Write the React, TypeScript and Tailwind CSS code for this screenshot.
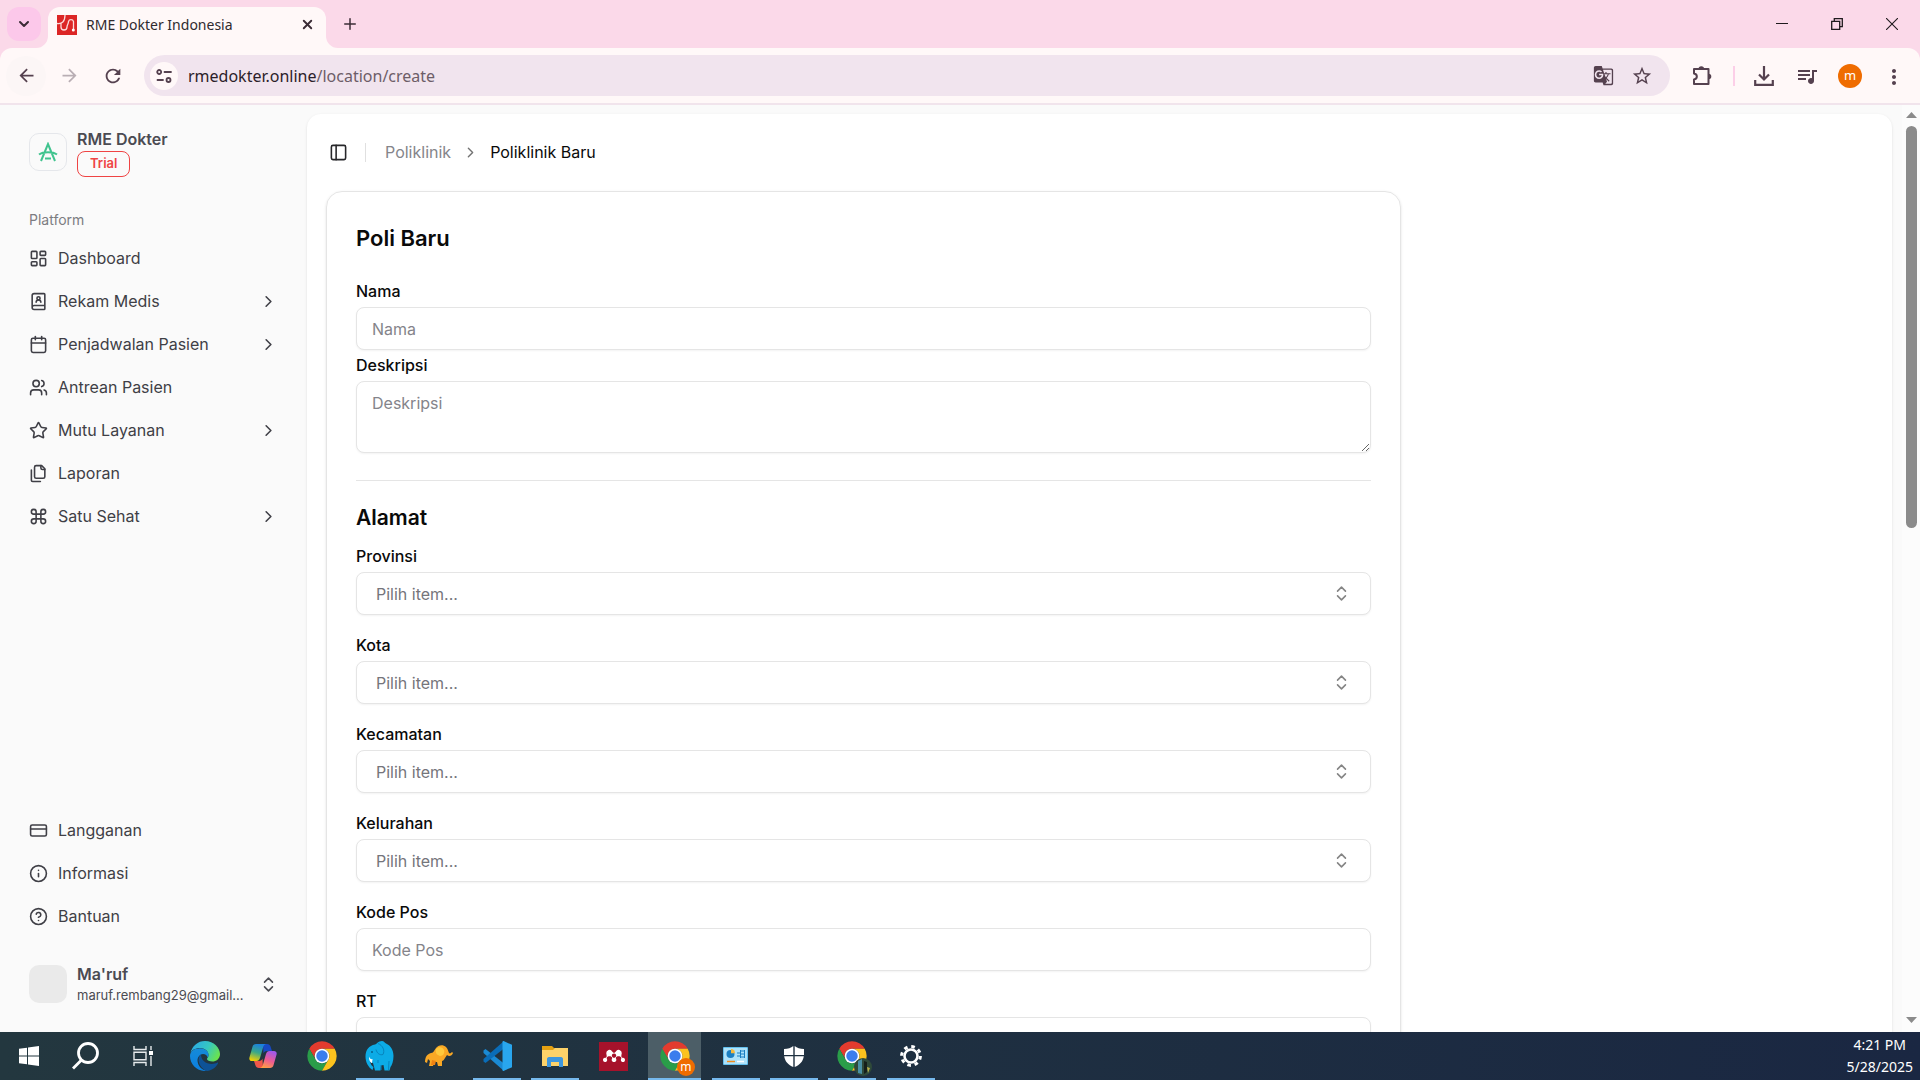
import { useState } from "react";
import {
  BookUser,
  Calendar,
  ChevronDown,
  ChevronRight,
  ChevronsUpDown,
  CircleHelp,
  Command,
  CreditCard,
  Info,
  LayoutDashboard,
  PanelLeft,
  Plus,
  Star,
  Users,
  X
} from "lucide-react";
import {
  MdArrowBack,
  MdArrowForward,
  MdGTranslate,
  MdMoreVert,
  MdQueueMusic,
  MdRefresh,
  MdStarBorder
} from "react-icons/md";
import { SiMendeley } from "react-icons/si";

type NavItem = {
  icon: React.ComponentType<{ size?: number }>;
  label: string;
  expandable?: boolean;
};

function FilesIcon({ size = 24 }: { size?: number }) {
  return (
    <svg
      fill="none"
      height={size}
      stroke="currentColor"
      strokeLinecap="round"
      strokeLinejoin="round"
      strokeWidth="2"
      viewBox="0 0 24 24"
      width={size}
    >
      <path d="M20 7h-3a2 2 0 0 1-2-2V2" />
      <path d="M9 18a2 2 0 0 1-2-2V4a2 2 0 0 1 2-2h7l4 4v10a2 2 0 0 1-2 2Z" />
      <path d="M3 7.6v12.8A1.6 1.6 0 0 0 4.6 22h9.8" />
    </svg>
  );
}

const MAIN_NAV: NavItem[] = [
  { icon: LayoutDashboard, label: "Dashboard" },
  { icon: BookUser, label: "Rekam Medis", expandable: true },
  { icon: Calendar, label: "Penjadwalan Pasien", expandable: true },
  { icon: Users, label: "Antrean Pasien" },
  { icon: Star, label: "Mutu Layanan", expandable: true },
  { icon: FilesIcon, label: "Laporan" },
  { icon: Command, label: "Satu Sehat", expandable: true }
];

const FOOTER_NAV: NavItem[] = [
  { icon: CreditCard, label: "Langganan" },
  { icon: Info, label: "Informasi" },
  { icon: CircleHelp, label: "Bantuan" }
];

const REGION_FIELDS = ["Provinsi", "Kota", "Kecamatan", "Kelurahan"];

/* ---------- browser chrome ---------- */

function Favicon() {
  return (
    <svg className="size-5 shrink-0" viewBox="0 0 20 20">
      <rect fill="#dc2626" height="20" width="20" />
      <path
        d="M0 8.500c5 1 8-2 8-8.500M4 8.500v3.500a3 3 0 0 0 6 0c0-2 1.500-3 1.500-5.500a2.600 2.600 0 0 1 5 0V14"
        fill="none"
        stroke="#fbdada"
        strokeLinecap="round"
        strokeWidth="1.300"
      />
      <circle cx="16.300" cy="15" fill="#fff" r="1.500" />
    </svg>
  );
}

function TabStrip() {
  return (
    <div className="flex h-12 items-start bg-[#fbd9e9] pl-[7px] pt-[7px] text-[#3b2c36]">
      <button
        aria-label="Search tabs"
        className="z-10 grid size-[34px] place-items-center rounded-xl bg-[#fcc8ea]"
        type="button"
      >
        <ChevronDown size={16} strokeWidth={3} />
      </button>
      <div className="relative ml-[7px] flex h-[41px] w-[278px] items-center rounded-t-xl bg-[#fff8f8] pb-[6px] pl-[9px] pr-[7px]">
        <svg className="absolute -left-3 bottom-0 size-3" viewBox="0 0 12 12">
          <path d="M12 0v12H0A12 12 0 0 0 12 0z" fill="#fff8f8" />
        </svg>
        <svg className="absolute -right-3 bottom-0 size-3" viewBox="0 0 12 12">
          <path d="M0 0v12h12A12 12 0 0 1 0 0z" fill="#fff8f8" />
        </svg>
        <Favicon />
        <span className="ml-[9px] flex-1 text-[14px] text-[#2f2a2e]">RME Dokter Indonesia</span>
        <button aria-label="Close tab" className="grid size-6 place-items-center" type="button">
          <X size={15} strokeWidth={3} />
        </button>
      </div>
      <button aria-label="New tab" className="ml-[7px] grid size-[34px] place-items-center" type="button">
        <Plus size={18} strokeWidth={2} />
      </button>
      <div className="ml-auto flex pr-px text-[#1f1a1d]">
        <button aria-label="Minimize" className="grid h-[34px] w-[55px] place-items-center" type="button">
          <svg className="size-3" viewBox="0 0 12 12">
            <path d="M0 5.500h12" stroke="currentColor" />
          </svg>
        </button>
        <button aria-label="Restore" className="grid h-[34px] w-[55px] place-items-center" type="button">
          <svg className="size-3" fill="none" viewBox="0 0 12 12">
            <path d="M.7 3.300h8v8h-8zM3.300 3V.7h8v8H9" stroke="currentColor" strokeWidth="1.300" />
          </svg>
        </button>
        <button aria-label="Close" className="grid h-[34px] w-[55px] place-items-center" type="button">
          <svg className="size-3" fill="none" viewBox="0 0 12 12">
            <path d="M0 0l12 12M12 0L0 12" stroke="currentColor" strokeWidth="1.100" />
          </svg>
        </button>
      </div>
    </div>
  );
}

function Toolbar() {
  return (
    <div className="bg-[#fbd9e9]">
      <div className="flex h-[57px] items-center rounded-t-xl border-b-2 border-[#f1e4ec] bg-[#fff8f8] pl-[6px] pr-[7px] text-[#55414f]">
        <button aria-label="Back" className="grid size-10 place-items-center rounded-full bg-[#fcf6f6]" type="button">
          <MdArrowBack size={21} />
        </button>
        <button aria-label="Forward" className="ml-[3px] grid size-10 place-items-center text-[#b9aeb4]" type="button">
          <MdArrowForward size={21} />
        </button>
        <button aria-label="Reload" className="ml-[4px] grid size-10 place-items-center" type="button">
          <MdRefresh size={22} />
        </button>
        <div className="ml-[11px] flex h-[41px] flex-1 items-center rounded-full bg-[#f1e4ee] pl-[6px] pr-[16px]">
          <button
            aria-label="Site information"
            className="grid size-7 shrink-0 place-items-center rounded-full bg-[#fff8f8]"
            type="button"
          >
            <svg className="size-4" fill="none" stroke="currentColor" strokeLinecap="round" strokeWidth="1.800" viewBox="0 0 16 16">
              <circle cx="3.200" cy="4" r="2" />
              <path d="M8.500 4H15M1.500 12H7" />
              <circle cx="12.500" cy="12" r="2" />
            </svg>
          </button>
          <span className="ml-[10px] flex-1 text-[16px] text-[#2b2129]">
            rmedokter.online<span className="text-[#6d5d67]">/location/create</span>
          </span>
          <button aria-label="Translate this page" className="grid size-8 place-items-center" type="button">
            <MdGTranslate size={21} />
          </button>
          <button aria-label="Bookmark this tab" className="ml-[11px] grid size-6 place-items-center" type="button">
            <MdStarBorder size={22} />
          </button>
        </div>
        <button aria-label="Extensions" className="ml-[16px] grid size-8 place-items-center" type="button">
          <svg className="size-5" fill="none" viewBox="0 0 20 20">
            <path
              d="M2 3h14.500v15H2v-4.500c3.800-.6 3.800-5.400 0-6z"
              stroke="currentColor"
              strokeLinejoin="round"
              strokeWidth="2"
            />
            <path d="M6.500 3a2.800 2.800 0 0 1 5.600 0zM16.500 7.700a2.800 2.800 0 0 1 0 5.600z" fill="currentColor" />
          </svg>
        </button>
        <div className="ml-[15px] h-5 w-[2px] bg-[#fccfe8]" />
        <button aria-label="Downloads" className="ml-[13px] grid size-8 place-items-center" type="button">
          <svg className="size-5" fill="none" stroke="currentColor" strokeWidth="2.200" viewBox="0 0 20 20">
            <path d="M10 0v13M5 8.500l5 5 5-5M1.200 14v4.800h17.600V14" />
          </svg>
        </button>
        <button aria-label="Media controls" className="ml-[11px] grid size-8 place-items-center" type="button">
          <MdQueueMusic size={24} />
        </button>
        <button
          aria-label="Profile"
          className="ml-[15px] grid size-6 place-items-center rounded-full bg-[#ef6c00] text-[13px] leading-none text-white"
          type="button"
        >
          m
        </button>
        <button aria-label="Menu" className="ml-[20px] grid size-[22px] place-items-center" type="button">
          <MdMoreVert size={24} />
        </button>
        <span className="w-[9px]" />
      </div>
    </div>
  );
}

/* ---------- sidebar ---------- */

function NavLink({ item }: { item: NavItem }) {
  const Icon = item.icon;

  return (
    <li>
      <a className="flex h-[38px] items-center gap-[10px] text-[#3f3f46]" href="#">
        <Icon size={19} />
        <span className="flex-1">{item.label}</span>
        {item.expandable && <ChevronRight size={19} />}
      </a>
    </li>
  );
}

function Sidebar() {
  return (
    <aside className="flex w-[307px] shrink-0 flex-col px-[29px] pb-6 pt-[22px] text-[16px] text-[#4b4b52]">
      <div className="flex items-center gap-[10px]">
        <div className="grid size-[38px] place-items-center rounded-[10px] border border-[#e5e7eb]">
          <svg className="size-5" fill="none" stroke="#41c48f" strokeWidth="2" viewBox="0 0 20 20">
            <path d="M3 19L10 2l7 17M1 12.500C5 9.500 15 9.500 19 12.500M7 16.500h6" />
          </svg>
        </div>
        <div className="flex flex-col items-start">
          <span className="h-6 font-semibold leading-6">RME Dokter</span>
          <span className="flex h-[26px] items-center rounded-lg border border-[#ef4444] px-3 text-[13px] font-semibold text-[#ef4444]">
            Trial
          </span>
        </div>
      </div>

      <h2 className="mb-2 mt-8 text-[14px] leading-[22px] text-[#7c7c81]">Platform</h2>
      <nav>
        <ul className="flex flex-col gap-[5px]">
          {MAIN_NAV.map((item) => (
            <NavLink item={item} key={item.label} />
          ))}
        </ul>
      </nav>

      <nav className="mb-[25px] mt-auto">
        <ul className="flex flex-col gap-[5px]">
          {FOOTER_NAV.map((item) => (
            <NavLink item={item} key={item.label} />
          ))}
        </ul>
      </nav>
      <button className="flex h-12 items-center gap-[10px] text-left" type="button">
        <span className="size-[38px] shrink-0 rounded-[10px] bg-[#eaeaea]" />
        <span className="grid min-w-0 flex-1">
          <span className="font-semibold leading-[22px]">Ma'ruf</span>
          <span className="text-[13px] leading-5">maruf.rembang29@gmail...</span>
        </span>
        <ChevronsUpDown className="shrink-0" size={19} />
      </button>
    </aside>
  );
}

/* ---------- form ---------- */

const controlClass =
  "w-full rounded-lg border border-[#e5e5e5] bg-white shadow-xs outline-none placeholder:text-[#84848a] focus:border-[#a1a1aa]";

function Field({ children, id, label }: { children: React.ReactNode; id: string; label: string }) {
  return (
    <div className="grid gap-1">
      <label className="font-medium leading-6" htmlFor={id}>
        {label}
      </label>
      {children}
    </div>
  );
}

function TextField({ label }: { label: string }) {
  const id = label.toLowerCase().replace(" ", "-");

  return (
    <Field id={id} label={label}>
      <input className={`${controlClass} h-[43px] px-[15px]`} id={id} placeholder={label} type="text" />
    </Field>
  );
}

function SelectField({ label }: { label: string }) {
  const id = label.toLowerCase();
  const [value, setValue] = useState("");

  return (
    <Field id={id} label={label}>
      <div className="grid items-center">
        <select
          className={`${controlClass} col-start-1 row-start-1 h-[43px] appearance-none px-[19px] text-[#75757b]`}
          id={id}
          onChange={(event) => setValue(event.target.value)}
          value={value}
        >
          <option value="">Pilih item...</option>
        </select>
        <ChevronsUpDown
          className="pointer-events-none col-start-1 row-start-1 mr-5 justify-self-end text-[#858585]"
          size={19}
        />
      </div>
    </Field>
  );
}

function PoliForm() {
  return (
    <form className="ml-[19px] mr-5 max-w-[1075px] rounded-2xl border border-[#e5e5e5] px-[29px] pb-8 pt-8 text-[16px] text-[#0a0a0a] shadow">
      <h1 className="text-[22px] font-semibold leading-7">Poli Baru</h1>
      <div className="mt-[27px] grid gap-[3px]">
        <TextField label="Nama" />
        <Field id="deskripsi" label="Deskripsi">
          <textarea className={`${controlClass} h-[72px] px-[15px] py-[9px] leading-6`} id="deskripsi" placeholder="Deskripsi" />
        </Field>
      </div>
      <hr className="mb-[21px] mt-[27px] border-[#e5e5e5]" />
      <h2 className="text-[21px] font-semibold leading-8">Alamat</h2>
      <div className="mt-[10px] grid gap-[18px]">
        {REGION_FIELDS.map((label) => (
          <SelectField key={label} label={label} />
        ))}
        <TextField label="Kode Pos" />
        <TextField label="RT" />
      </div>
    </form>
  );
}

function Main() {
  return (
    <main className="mr-[10px] mt-[9px] min-w-0 flex-1 rounded-t-[14px] bg-white shadow">
      <header className="flex h-[77px] items-center pb-px pl-[22px] text-[16px]">
        <button aria-label="Toggle sidebar" className="text-[#27272a]" type="button">
          <PanelLeft size={19} />
        </button>
        <div className="ml-[17px] h-[19px] w-px bg-[#e0e0e0]" />
        <nav aria-label="Breadcrumb" className="ml-[19px] flex items-center gap-[11px]">
          <a className="text-[#85858a]" href="#">
            Poliklinik
          </a>
          <ChevronRight className="text-[#737373]" size={17} />
          <span aria-current="page" className="text-[#0a0a0a]">
            Poliklinik Baru
          </span>
        </nav>
      </header>
      <PoliForm />
    </main>
  );
}

function Scrollbar() {
  return (
    <div className="flex w-[18px] shrink-0 flex-col items-center bg-[#fcfcfc] py-[7px]">
      <svg className="h-[6px] w-[11px]" viewBox="0 0 11 6">
        <path d="M5.500 0L11 6H0z" fill="#8b8b8b" />
      </svg>
      <div className="mt-2 h-[44%] w-[11px] rounded-full bg-[#8b8b8b]" />
      <svg className="mb-[2px] mt-auto h-[6px] w-[11px]" viewBox="0 0 11 6">
        <path d="M5.500 6L0 0h11z" fill="#8b8b8b" />
      </svg>
    </div>
  );
}

/* ---------- taskbar ---------- */

function ChromeIcon() {
  return (
    <svg className="size-8" viewBox="0 0 48 48">
      <path d="M4.950 13a22 22 0 0 1 38.100 0H24a11 11 0 0 0-9.530 16.500z" fill="#e33b2e" />
      <path d="M4.950 13A22 22 0 0 0 24 46l9.530-16.500a11 11 0 0 1-19.060 0z" fill="#2a9d49" />
      <path d="M43.050 13A22 22 0 0 1 24 46l9.530-16.500A11 11 0 0 0 24 13z" fill="#fcc31e" />
      <circle cx="24" cy="24" fill="#fff" r="11" />
      <circle cx="24" cy="24" fill="#3b7ded" r="8.600" />
    </svg>
  );
}

function WindowsIcon() {
  return (
    <svg className="size-5" fill="#fff" viewBox="0 0 20 20">
      <path d="M0 2.800L8 1.700v7.800H0zM9 1.500L20 0v9.500H9zM0 10.500h8v7.800l-8-1.100zM9 10.500h11V20L9 18.500z" />
    </svg>
  );
}

function SearchIcon() {
  return (
    <svg className="size-7" fill="none" stroke="#fff" strokeWidth="2.800" viewBox="0 0 28 28">
      <circle cx="16" cy="11" r="9.500" />
      <path d="M9.500 18L1 26.500" />
    </svg>
  );
}

function TaskViewIcon() {
  return (
    <svg className="size-5" fill="none" stroke="#e6eaec" strokeWidth="1.400" viewBox="0 0 20 20">
      <path d="M1 0v3.500h12V0M1 20v-3.500h12V20M1 6.200h12v7.600H1zM18 0v4M18 10v10" />
      <path d="M16 5h4v4h-4z" fill="#fff" stroke="none" />
    </svg>
  );
}

function EdgeIcon() {
  return (
    <svg className="size-[30px]" viewBox="0 0 30 30">
      <defs>
        <linearGradient id="edge-top" x1="0" x2="1" y1="0.200" y2="0.600">
          <stop offset="0" stopColor="#2aa9e8" />
          <stop offset="0.550" stopColor="#36c8c0" />
          <stop offset="1" stopColor="#6be34c" />
        </linearGradient>
        <linearGradient id="edge-left" x1="0" x2="0" y1="0" y2="1">
          <stop offset="0" stopColor="#168bd8" />
          <stop offset="1" stopColor="#0a7ee0" />
        </linearGradient>
      </defs>
      <path d="M.5 12A14.800 14.800 0 0 1 15 0c9 0 15 7 15 13 0 5-4 7.500-7.500 7.500-3 0-5.500-1-5.500-2.500 0-1 1.500-1.500 1.500-4 0-4-4-7-8.500-7C5 7 1.500 9.500.5 12z" fill="url(#edge-top)" />
      <path d="M0 15C0 10 5 7.300 10 7.300c5 0 8.500 3 8.500 6.700 0 1-.3 2-.8 2.600-.4-2-2.200-3.600-4.700-3.600-3 0-5.500 3-5.500 6.500 0 5 4.500 10 9.500 10.400C8 31 0 24 0 15z" fill="url(#edge-left)" />
      <path d="M11 13.500C6 17 9 27.500 17 29.900c4.500-.4 8.500-3 11-7.400.4-.8-.2-1.100-.9-.7-1.100.6-3 1.200-5.100 1.200-6.500 0-11-4-11-9.500z" fill="#0e5296" />
    </svg>
  );
}

function CopilotIcon() {
  return (
    <svg className="size-7" viewBox="0 0 28 28">
      <defs>
        <linearGradient id="copilot-a" x1="0.600" x2="0.300" y1="0" y2="1">
          <stop offset="0" stopColor="#1a7fe0" />
          <stop offset="0.500" stopColor="#3aa889" />
          <stop offset="1" stopColor="#f4d000" />
        </linearGradient>
        <linearGradient id="copilot-b" x1="0.600" x2="0.200" y1="0" y2="1">
          <stop offset="0" stopColor="#a259e8" />
          <stop offset="0.500" stopColor="#ee5c92" />
          <stop offset="1" stopColor="#ffa33f" />
        </linearGradient>
      </defs>
      <path d="M14 2h4c2 0 3 1 3.500 2.500L23 9h-5c-2 0-3 1-3.500 2.500z" fill="#1749c4" />
      <path d="M14 26h-4c-2 0-3-1-3.500-2.500L5 19h5c2 0 3-1 3.500-2.500z" fill="#f0574a" />
      <path d="M7 2h10c-1.500.3-2.300 1.500-2.800 3L11 16c-.7 2-1.600 3-3.500 3H3c-2 0-3.200-1.600-2.500-3.800l3-10.400C4 3 5.200 2 7 2z" fill="url(#copilot-a)" />
      <path d="M21 26H11c1.500-.3 2.300-1.500 2.800-3L17 12c.7-2 1.600-3 3.500-3H25c2 0 3.200 1.600 2.500 3.800l-3 10.400C24 25 22.800 26 21 26z" fill="url(#copilot-b)" />
    </svg>
  );
}

function BlueElephantIcon() {
  return (
    <svg className="size-[30px]" viewBox="0 0 30 30">
      <path d="M10 3.500C12 3 13 0 17 0c2 0 2.500 1.500 4 2.500 5 2 7.500 7 7.500 12.500 0 5-1.500 9-3 11l-1 3.500h-5L18.500 24l-2.500.5-.5 5h-5.500L8 22c-1.500 0-2.500-1-3-2.500.3 3 1 5 3.500 6.500L7.500 29C3 26 .5 21 .5 15.500.5 9 4 4.500 10 3.500z" fill="#0cabe6" />
      <path d="M13 2.500c5 2 7 7 5 11-3 1-6-1-7-5" fill="none" stroke="#0784bd" />
      <path d="M4 15.500c.5 2 2 3 3.500 2.500L7 22c-2-.5-3.200-3.500-3-6.500z" fill="#fff" />
      <circle cx="7" cy="11" fill="#07618c" r="1" />
      <path d="M16 24v5M24 20l-.5 9M13 19v3" stroke="#0784bd" />
    </svg>
  );
}

function YellowElephantIcon() {
  return (
    <svg className="h-[22px] w-7" viewBox="0 0 28 22">
      <path d="M11 3c2-3 7-4 10-1 2 2 2 4 3 6 1 1 2 0 3-1l1 1c-1 3-4 4-6 2l-2 3c-1 2-2 3-3 3v5h-4l-1-4h-3l-1 4H4l1-5-2-2-1 4-2-1c0-5 2-8 6-9 2 0 3-2 5-5z" fill="#f9a825" />
      <path d="M11 4c3-3 7-2 8 1s-1 6-4 6c-3-1-5-3-4-7z" fill="#ffc93c" />
      <path d="M6 20l1-5 4 1-1 4z" fill="#ee8112" />
    </svg>
  );
}

function VsCodeIcon() {
  return (
    <svg className="size-[30px]" viewBox="0 0 30 30">
      <path d="M1.500 9.500L3.500 8 22 22.500V30L1.500 12z" fill="#1a8ad4" />
      <path d="M1.500 20.500L3.500 22 22 7.500V0L1.500 18z" fill="#0a6db8" />
      <path d="M21.500 0L30 3.800v22.400L21.500 30c-.6.100-1-.4-1-1V1c0-.6.400-1.100 1-1z" fill="#29a6ee" />
    </svg>
  );
}

function FolderIcon() {
  return (
    <svg className="h-[22px] w-[26px]" viewBox="0 0 26 22">
      <path d="M0 1h10l2 2h14v5H0z" fill="#e5a112" />
      <path d="M0 5h11l2-2h13v18H0z" fill="#fdd269" />
      <path d="M5 22v-8c0-1 .7-2 2-2h12c1.300 0 2 1 2 2v8h-4v-5H9v5z" fill="#3f97dd" />
    </svg>
  );
}

function MendeleyIcon() {
  return (
    <span className="grid size-[29px] place-items-center bg-[#a6122b] text-white">
      <SiMendeley size={22} />
    </span>
  );
}

function ControlPanelIcon() {
  return (
    <svg className="h-[18px] w-[25px]" viewBox="0 0 25 18">
      <rect fill="#64c0ee" height="18" rx="1" width="25" />
      <rect fill="#aee2fa" height="16" width="23" x="1" y="1" />
      <circle cx="7.500" cy="7" fill="#1b7fc2" r="4" />
      <path d="M8 6.300V2a4 4 0 0 1 4 4.300z" fill="#f6b93b" />
      <path d="M14 6h3M14 9h3M18 4h4M18 7h4M18 10h4M17.500 3v8M21.500 3v8" fill="none" stroke="#1b7fc2" />
      <path d="M4 14.500h8" stroke="#f08c1d" strokeWidth="1.500" />
      <path d="M14 14.500h7" stroke="#fff" strokeWidth="1.500" />
    </svg>
  );
}

function ShieldIcon() {
  return (
    <svg className="size-[22px]" fill="#fff" viewBox="0 0 22 22">
      <path d="M10.300 1v9H1V4c4 0 7-1 9.300-3zM11.700 1c2.300 2 5.300 3 9.300 3v6h-9.300zM1.200 11.300h9.100V22c-5-2-8.400-5.500-9.100-10.700zM20.800 11.300h-9.100V22c5-2 8.400-5.500 9.100-10.700z" />
    </svg>
  );
}

function ProfileChrome({ children }: { children: React.ReactNode }) {
  return (
    <span className="relative block">
      <ChromeIcon />
      <span className="absolute -bottom-1 -right-1">{children}</span>
    </span>
  );
}

function TaskButton({
  children,
  label,
  state = "idle"
}: {
  children: React.ReactNode;
  label: string;
  state?: "idle" | "open" | "active";
}) {
  return (
    <button
      aria-label={label}
      className={`flex h-12 flex-col items-center ${state === "active" ? "w-[53px] bg-[#4c5e67]" : "w-12"}`}
      type="button"
    >
      <span className="grid flex-1 place-items-center">{children}</span>
      <span className={`-mt-[2px] h-[2px] w-full ${state === "idle" ? "" : "bg-[#76b9ed]"}`} />
    </button>
  );
}

function Taskbar() {
  return (
    <footer className="flex h-12 shrink-0 items-center bg-linear-to-r from-[#23373f] to-[#1a2742] pl-[5px] pr-[7px] text-white">
      <div className="flex gap-[9px]">
        <TaskButton label="Start">
          <WindowsIcon />
        </TaskButton>
        <TaskButton label="Search">
          <SearchIcon />
        </TaskButton>
        <TaskButton label="Task View">
          <TaskViewIcon />
        </TaskButton>
      </div>
      <div className="ml-[14px] flex w-[754px] justify-between">
        <TaskButton label="Edge">
          <EdgeIcon />
        </TaskButton>
        <TaskButton label="Copilot">
          <CopilotIcon />
        </TaskButton>
        <TaskButton label="Chrome">
          <ChromeIcon />
        </TaskButton>
        <TaskButton label="Database" state="open">
          <BlueElephantIcon />
        </TaskButton>
        <TaskButton label="Local server">
          <YellowElephantIcon />
        </TaskButton>
        <TaskButton label="Code" state="open">
          <VsCodeIcon />
        </TaskButton>
        <TaskButton label="File Explorer" state="open">
          <FolderIcon />
        </TaskButton>
        <TaskButton label="Mendeley">
          <MendeleyIcon />
        </TaskButton>
        <TaskButton label="Chrome, profile m" state="active">
          <ProfileChrome>
            <span className="grid size-[18px] place-items-center rounded-full bg-[#ef6c00] text-[12px] leading-none">m</span>
          </ProfileChrome>
        </TaskButton>
        <TaskButton label="Control Panel" state="open">
          <ControlPanelIcon />
        </TaskButton>
        <TaskButton label="Windows Security" state="open">
          <ShieldIcon />
        </TaskButton>
        <TaskButton label="Chrome, second profile" state="open">
          <ProfileChrome>
            <svg className="size-[18px]" viewBox="0 0 18 18">
              <circle cx="9" cy="9" fill="#2f4a3a" r="9" />
              <path d="M4 3l4-2v15l-4-1z" fill="#4a90a4" />
              <path d="M10 3l3 1v10l-3 2z" fill="#16201a" />
              <path d="M13 9l3 1-2 5z" fill="#b7b04a" />
            </svg>
          </ProfileChrome>
        </TaskButton>
        <TaskButton label="Settings" state="open">
          <svg className="size-[22px]" fill="none" viewBox="0 0 22 22">
            <circle cx="11" cy="11" r="6.500" stroke="#fff" strokeWidth="2.600" />
            <circle cx="11" cy="11" r="9.400" stroke="#fff" strokeDasharray="3.600 3.780" strokeWidth="3" />
          </svg>
        </TaskButton>
      </div>
      <div className="ml-auto text-center text-[14px] leading-[22px]">
        <div>4:21 PM</div>
        <div>5/28/2025</div>
      </div>
    </footer>
  );
}

export default function App() {
  return (
    <div className="flex h-screen flex-col overflow-hidden font-['Noto_Sans',sans-serif]">
      <TabStrip />
      <Toolbar />
      <div className="flex min-h-0 flex-1 overflow-hidden bg-[#fafafa] font-['Inter',sans-serif]">
        <Sidebar />
        <Main />
        <Scrollbar />
      </div>
      <Taskbar />
    </div>
  );
}
